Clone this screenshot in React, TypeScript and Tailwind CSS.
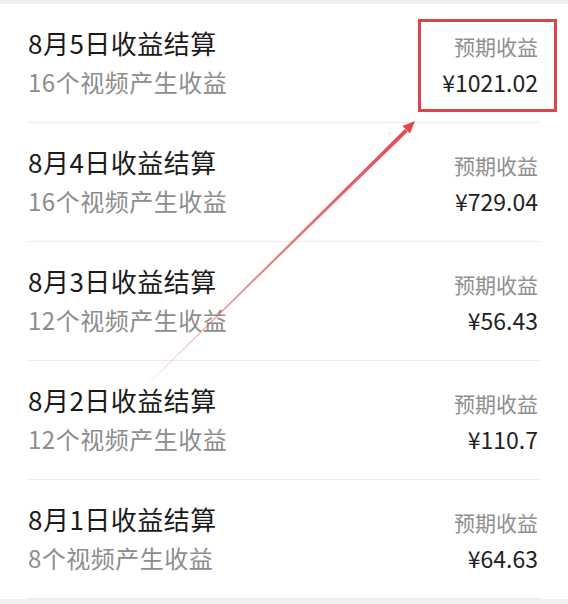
import React from 'react';

type Row = { date: string; videos: number; amount: string };

const ROWS: Row[] = [
  { date: '8月5日收益结算', videos: 16, amount: '¥1021.02' },
  { date: '8月4日收益结算', videos: 16, amount: '¥729.04' },
  { date: '8月3日收益结算', videos: 12, amount: '¥56.43' },
  { date: '8月2日收益结算', videos: 12, amount: '¥110.7' },
  { date: '8月1日收益结算', videos: 8, amount: '¥64.63' },
];

const font = { fontFamily: '"Noto Sans CJK SC", "Noto Sans", sans-serif' };

const Arrow: React.FC = () => (
  <svg className="absolute inset-0 pointer-events-none" width="568" height="604" viewBox="0 0 568 604">
    <defs>
      <linearGradient id="fade" x1="150" y1="382" x2="415" y2="121" gradientUnits="userSpaceOnUse">
        <stop offset="0" stopColor="#e2474c" stopOpacity="0.15" />
        <stop offset="0.3" stopColor="#e2474c" stopOpacity="0.6" />
        <stop offset="1" stopColor="#e2474c" stopOpacity="1" />
      </linearGradient>
    </defs>
    {/* tapered shaft */}
    <polygon points="150.2,382.2 149.8,381.8 404.9,128.9 407.7,131.7" fill="url(#fade)" />
    {/* head */}
    <polygon points="415,121 402.5,126 410,133.5" fill="#e2474c" />
  </svg>
);

export default function App() {
  return (
    <div className="relative w-[568px] h-[604px] bg-[#efefef] overflow-hidden" style={font}>
      <div className="mt-[4px] bg-white">
        {ROWS.map((r) => (
          <div key={r.date} className="px-[28px]">
            <div className="h-[119px] flex items-center justify-between border-b border-[#ececec]">
              <div className="flex flex-col pt-[2px]">
                <span className="text-[26px] leading-[36px] text-[#1b1b1b] tracking-[0.5px]">{r.date}</span>
                <span className="text-[24px] leading-[42px] text-[#8d8d8d] tracking-[0.5px]">
                  {r.videos}个视频产生收益
                </span>
              </div>
              <div className="flex flex-col items-end pr-[2px] pt-[2px]">
                <span className="text-[21px] leading-[36px] text-[#8f8f8f]">预期收益</span>
                <span className="text-[23px] leading-[36px] text-[#222222]">{r.amount}</span>
              </div>
            </div>
          </div>
        ))}
      </div>
      <div className="absolute left-[418px] top-[19px] w-[139px] h-[93px] border-[3px] border-[#d9474c]" />
      <Arrow />
    </div>
  );
}
